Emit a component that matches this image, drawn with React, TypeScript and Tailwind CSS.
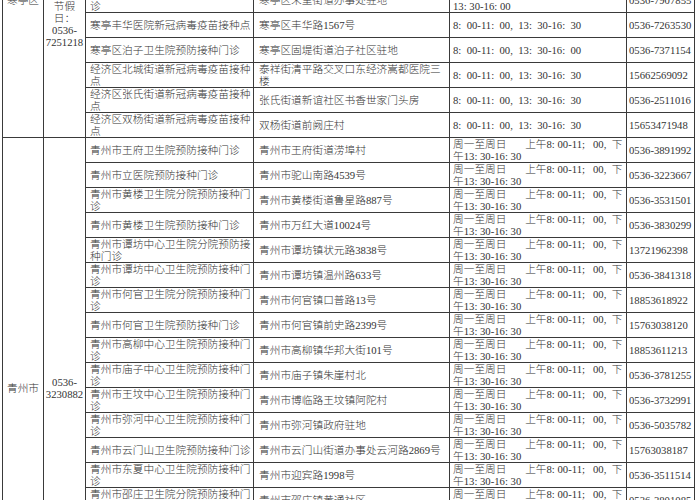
import React from "react";

type Row = { name: string; addr: string; time: string[]; phone: string };
type Section = { district: string; hotline: string; rows: Row[] };

const HT_TIME = ["8:\u200200-11:\u200200,\u200213:\u200230-16:\u200230"];
const HT_TIME_16 = ["8:\u200200-11:\u200200,\u200213:\u200230-16:\u200200"];
const QZ_TIME = [
  "周一至周日\u00a0\u00a0\u00a0\u00a0\u00a0\u00a0\u00a0上午8: 00-11;\u2002\u00a000,\u2002下",
  "午13: 30-16: 30",
];

const sections: Section[] = [
  {
    district: "寒亭区",
    hotline: "工作日：0536-\u200b7251218 节假日：0536-\u200b7251218",
    rows: [
      { name: "寒亭区人民医院预防接种门诊", addr: "寒亭区通亭街", time: HT_TIME, phone: "0536-7218120" },
      { name: "寒亭区妇幼保健院预防接种门诊", addr: "寒亭区民主街", time: HT_TIME, phone: "0536-7251130" },
      { name: "寒亭区高里卫生院预防接种门诊", addr: "寒亭区高里街道驻地", time: HT_TIME_16, phone: "0536-7640120" },
      { name: "寒亭区开元卫生院预防接种门诊", addr: "寒亭区开元街道驻地", time: HT_TIME_16, phone: "0536-7505120" },
      { name: "寒亭区双杨卫生院预防接种门诊", addr: "寒亭区双杨街道驻地", time: HT_TIME_16, phone: "0536-7668120" },
      {
        name: "寒亭区朱里街道卫生院预防接种门诊",
        addr: "寒亭区朱里街道办事处驻地",
        time: ["周一至周六\u00a0\u00a08:\u200200-11:\u200200,", "13: 30-16: 00"],
        phone: "0536-7907855",
      },
      { name: "寒亭丰华医院新冠病毒疫苗接种点", addr: "寒亭区丰华路1567号", time: HT_TIME, phone: "0536-7263530" },
      { name: "寒亭区泊子卫生院预防接种门诊", addr: "寒亭区固堤街道泊子社区驻地", time: HT_TIME_16, phone: "0536-7371154" },
      { name: "经济区北城街道新冠病毒疫苗接种点", addr: "泰祥街清平路交叉口东经济嵩都医院三楼", time: HT_TIME, phone: "15662569092" },
      { name: "经济区张氏街道新冠病毒疫苗接种点", addr: "张氏街道新谊社区书香世家门头房", time: HT_TIME, phone: "0536-2511016" },
      { name: "经济区双杨街道新冠病毒疫苗接种点", addr: "双杨街道前阙庄村", time: HT_TIME, phone: "15653471948" },
    ],
  },
  {
    district: "青州市",
    hotline: "0536-\u200b3230882",
    rows: [
      { name: "青州市王府卫生院预防接种门诊", addr: "青州市王府街道涝埠村", time: QZ_TIME, phone: "0536-3891992" },
      { name: "青州市立医院预防接种门诊", addr: "青州市驼山南路4539号", time: QZ_TIME, phone: "0536-3223667" },
      { name: "青州市黄楼卫生院分院预防接种门诊", addr: "青州市黄楼街道鲁星路887号", time: QZ_TIME, phone: "0536-3531501" },
      { name: "青州市黄楼卫生院预防接种门诊", addr: "青州市万红大道10024号", time: QZ_TIME, phone: "0536-3830299" },
      { name: "青州市谭坊中心卫生院分院预防接种门诊", addr: "青州市谭坊镇状元路3838号", time: QZ_TIME, phone: "13721962398" },
      { name: "青州市谭坊中心卫生院预防接种门诊", addr: "青州市谭坊镇温州路633号", time: QZ_TIME, phone: "0536-3841318" },
      { name: "青州市何官卫生院分院预防接种门诊", addr: "青州市何官镇口普路13号", time: QZ_TIME, phone: "18853618922" },
      { name: "青州市何官卫生院预防接种门诊", addr: "青州市何官镇前史路2399号", time: QZ_TIME, phone: "15763038120" },
      { name: "青州市高柳中心卫生院预防接种门诊", addr: "青州市高柳镇华邦大街101号", time: QZ_TIME, phone: "18853611213" },
      { name: "青州市庙子中心卫生院预防接种门诊", addr: "青州市庙子镇朱崖村北", time: QZ_TIME, phone: "0536-3781255" },
      { name: "青州市王坟中心卫生院预防接种门诊", addr: "青州市博临路王坟镇阿陀村", time: QZ_TIME, phone: "0536-3732991" },
      { name: "青州市弥河中心卫生院预防接种门诊", addr: "青州市弥河镇政府驻地", time: QZ_TIME, phone: "0536-5035782" },
      { name: "青州市云门山卫生院预防接种门诊", addr: "青州市云门山街道办事处云河路2869号", time: QZ_TIME, phone: "15763038187" },
      { name: "青州市东夏中心卫生院预防接种门诊", addr: "青州市迎宾路1998号", time: QZ_TIME, phone: "0536-3511514" },
      { name: "青州市邵庄卫生院分院预防接种门诊", addr: "青州市邵庄镇黄通社区", time: QZ_TIME, phone: "0536-3801085" },
      { name: "青州市邵庄卫生院预防接种门诊", addr: "青州市邵庄镇驻地", time: QZ_TIME, phone: "0536-3801079" },
      { name: "青州市妇幼保健院预防接种门诊", addr: "青州市范公亭西路1号", time: QZ_TIME, phone: "0536-3272207" },
      { name: "青州市中医院预防接种门诊", addr: "青州市范公亭西路", time: QZ_TIME, phone: "0536-3286018" },
      { name: "青州市益都中心医院预防接种门诊", addr: "青州市玲珑山南路", time: QZ_TIME, phone: "0536-3266120" },
      { name: "青州市经济开发区卫生院预防接种门诊", addr: "青州市经济开发区", time: QZ_TIME, phone: "0536-3201265" },
    ],
  },
];

const cell = "border border-[#3a3a3a] align-middle p-0";

function SectionRows({ s }: { s: Section }) {
  return (
    <>
      {s.rows.map((r, i) => (
        <tr key={i} className="h-[25px]">
          {i === 0 && (
            <>
              <td rowSpan={s.rows.length} className={`${cell} text-center`}>
                {s.district}
              </td>
              <td rowSpan={s.rows.length} className={`${cell} px-px text-center`}>
                {s.hotline}
              </td>
            </>
          )}
          <td className={`${cell} pl-[4px] pr-[2px]`}>{r.name}</td>
          <td className={`${cell} pl-[5px] pr-[4px]`}>{r.addr}</td>
          <td className={`${cell} pl-[3px] whitespace-nowrap`}>
            {r.time.map((t, k) => (
              <div key={k}>{t}</div>
            ))}
          </td>
          <td className={`${cell} pl-[2px] whitespace-nowrap`}>{r.phone}</td>
        </tr>
      ))}
    </>
  );
}

export default function App() {
  return (
    <div className="h-[500px] w-[700px] overflow-hidden bg-white">
      <table
        className="ml-[2px] mt-[-138px] w-[692px] table-fixed border-collapse text-[10.7px] font-light leading-[12px] text-[#333]"
        style={{ fontFamily: '"Liberation Serif", "Noto Sans CJK SC", serif' }}
      >
        <colgroup>
          <col className="w-[41px]" />
          <col className="w-[42px]" />
          <col className="w-[168px]" />
          <col className="w-[196px]" />
          <col className="w-[177px]" />
          <col className="w-[68px]" />
        </colgroup>
        <tbody>
          {sections.map((s) => (
            <SectionRows key={s.district} s={s} />
          ))}
        </tbody>
      </table>
    </div>
  );
}
